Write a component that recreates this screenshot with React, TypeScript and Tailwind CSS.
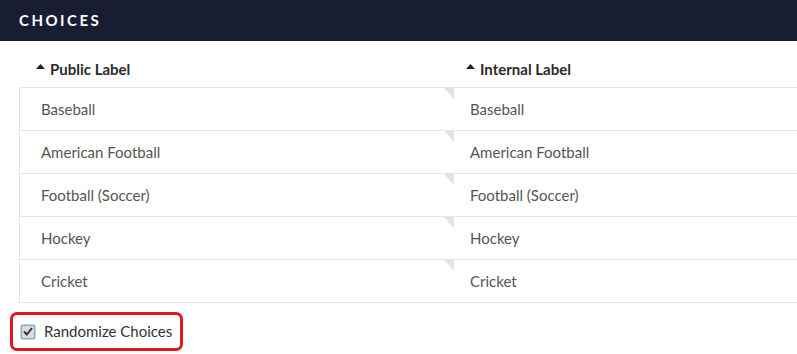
import type { FC } from 'react';

const rows = ['Baseball', 'American Football', 'Football (Soccer)', 'Hockey', 'Cricket'];

const Caret: FC = () => (
  <svg width="9" height="5" viewBox="0 0 9 5" className="mr-[5px] mb-[5px]">
    <path d="M0 5 L4.5 0 L9 5 Z" fill="#222" />
  </svg>
);

const App: FC = () => (
  <div className="w-[797px] h-[354px] bg-white overflow-hidden" style={{ fontFamily: 'Lato, "Open Sans", sans-serif' }}>
    <div className="h-[41px] bg-[#181d31] flex items-center px-[19px]">
      <h2 className="text-white text-[15px] font-bold tracking-[2.5px]">CHOICES</h2>
    </div>
    <div className="pl-[19px]">
      <div className="flex h-[46px] items-end pb-[7px] text-[15px] font-bold text-[#2b2b2b]">
        <div className="w-[434px] flex items-center pl-[17px]">
          <Caret />
          Public Label
        </div>
        <div className="flex items-center pl-[13px]">
          <Caret />
          Internal Label
        </div>
      </div>
      <div className="border-l border-t border-[#e6e6e6] w-[800px]">
        {rows.map((r) => (
          <div key={r} className="flex h-[43px] border-b border-[#e6e6e6] text-[15px] text-[#555]">
            <div className="relative w-[434px] flex items-center pl-[21px]">
              {r}
              <svg width="10" height="11" viewBox="0 0 10 11" className="absolute right-0 top-0">
                <path d="M0 0 L10 0 L10 11 Z" fill="#e2e2e2" />
              </svg>
            </div>
            <div className="flex items-center pl-[16px]">{r}</div>
          </div>
        ))}
      </div>
    </div>
    <div className="flex pl-[10px] pt-[9px]">
      <label className="flex items-center w-[173px] h-[39px] border-[3px] border-[#e3141b] rounded-[7px] pl-[8px] text-[15px] text-[#333]">
        <span className="w-[14px] h-[14px] mr-[9px] flex items-center justify-center rounded-[2px] border border-[#8aa8c8] bg-[#dcdcdc] shadow-[0_0_0_1px_#bcd6f0]">
          <svg width="10" height="9" viewBox="0 0 10 9">
            <path d="M1 4.5 L3.8 7.5 L9 1" fill="none" stroke="#333" strokeWidth="2" />
          </svg>
        </span>
        Randomize Choices
      </label>
    </div>
  </div>
);

export default App;
